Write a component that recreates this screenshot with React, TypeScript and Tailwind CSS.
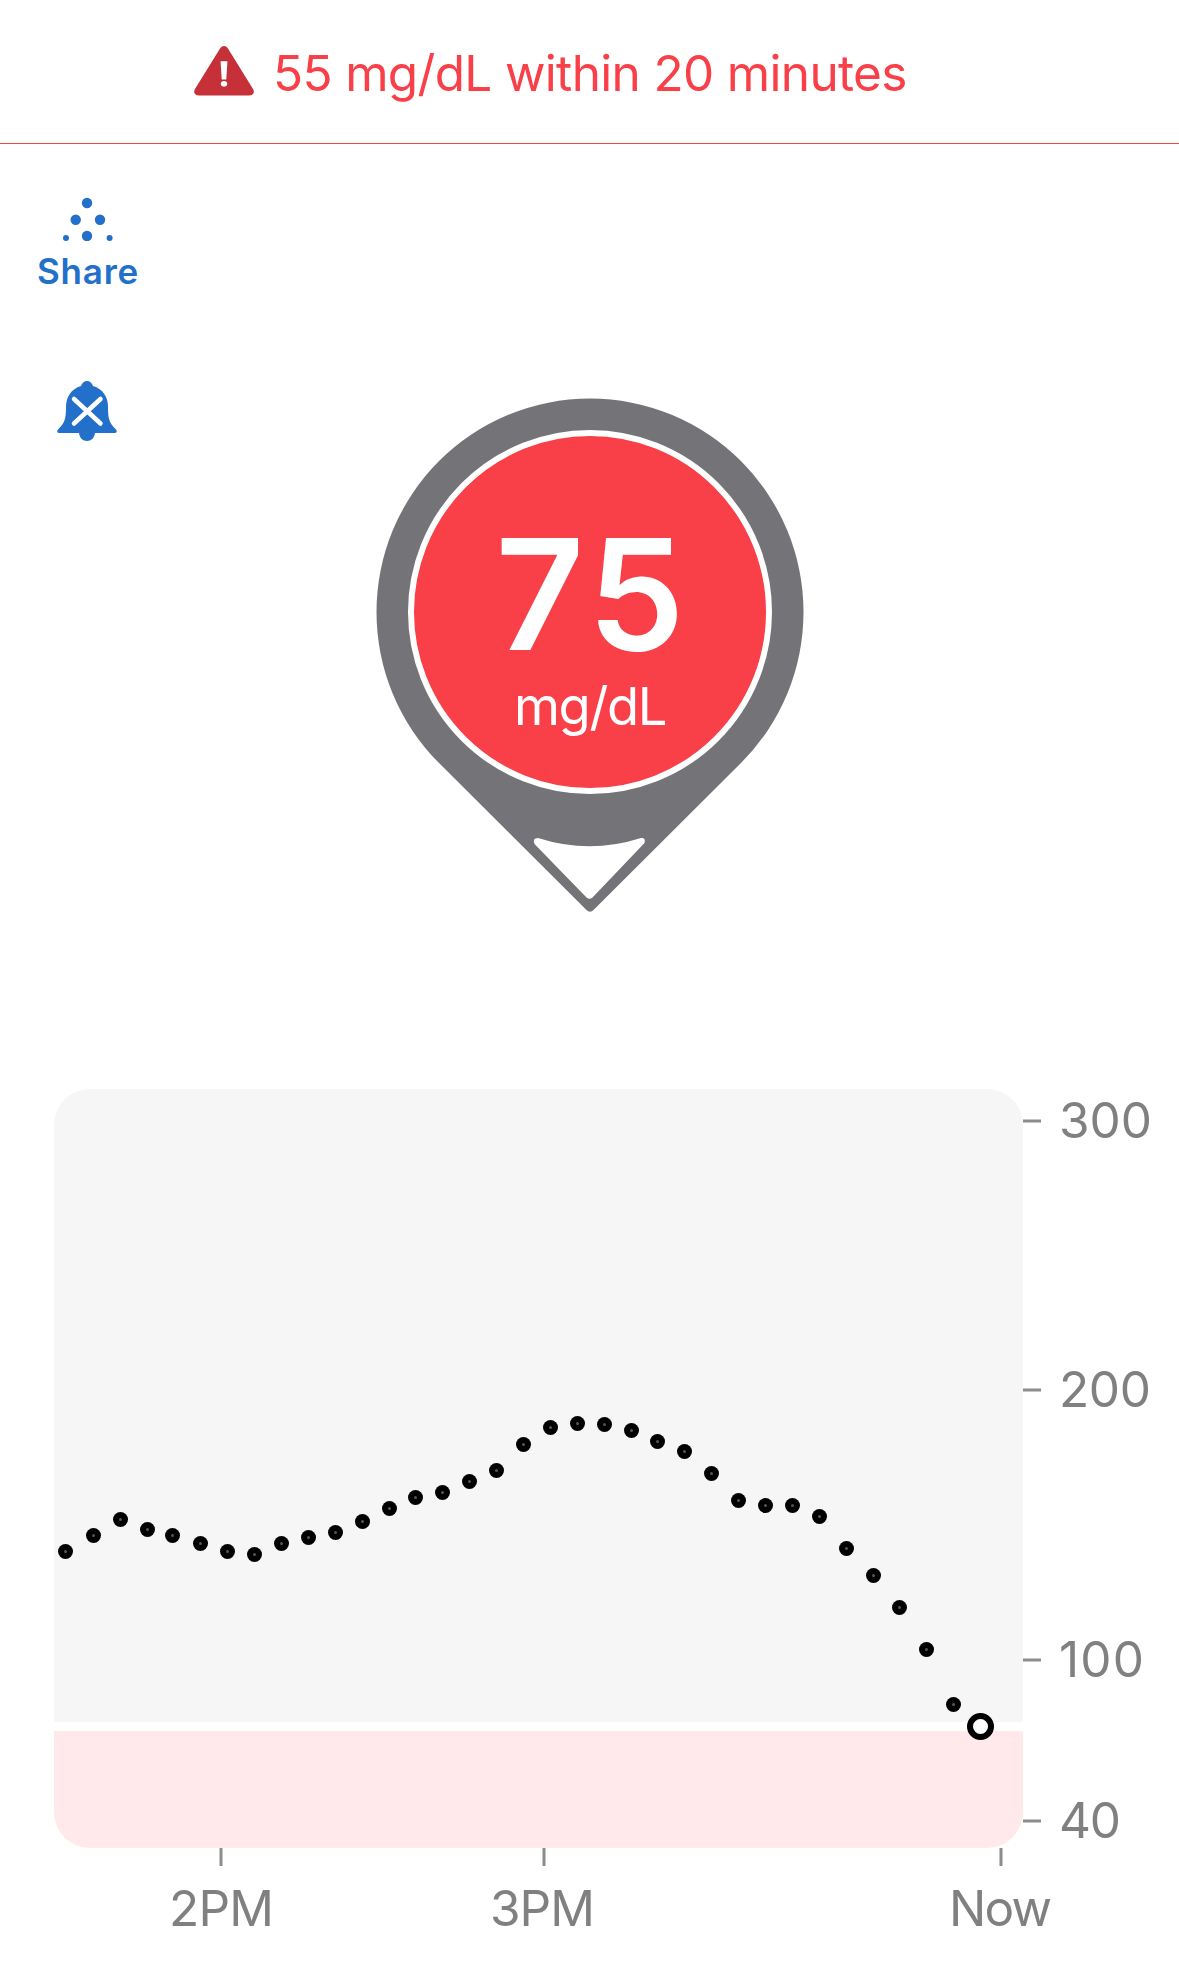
import React from 'react';

interface Reading {
  x: number;
  y: number;
}

interface Tick {
  label: string;
  pos: number;
  textPos: number;
  width: number;
}

// chart coordinates, origin at the top left of the plot area
const readings: Reading[] = [
  { x: 11.5, y: 462.5 },
  { x: 39.5, y: 446.5 },
  { x: 66.5, y: 430.5 },
  { x: 93.5, y: 440.5 },
  { x: 118.5, y: 446.5 },
  { x: 146.5, y: 454.5 },
  { x: 173.5, y: 462.5 },
  { x: 200.5, y: 465.5 },
  { x: 227.5, y: 454.5 },
  { x: 254.5, y: 448.5 },
  { x: 281.5, y: 443.5 },
  { x: 308.5, y: 432.5 },
  { x: 335.5, y: 419.5 },
  { x: 361.5, y: 408.5 },
  { x: 388.5, y: 403.5 },
  { x: 415.5, y: 392.5 },
  { x: 442.5, y: 381.5 },
  { x: 469.5, y: 355.5 },
  { x: 496.5, y: 338.5 },
  { x: 523.5, y: 334.5 },
  { x: 550.5, y: 335.5 },
  { x: 577.5, y: 341.5 },
  { x: 603.5, y: 352.5 },
  { x: 630.5, y: 362.5 },
  { x: 657.5, y: 384.5 },
  { x: 684.5, y: 411.5 },
  { x: 711.5, y: 416.5 },
  { x: 738.5, y: 416.5 },
  { x: 765.5, y: 427.5 },
  { x: 792.5, y: 459.5 },
  { x: 819.5, y: 486.5 },
  { x: 845.5, y: 518.5 },
  { x: 872.5, y: 560.5 },
  { x: 899.5, y: 615.5 },
];

const current: Reading = { x: 926.5, y: 637.5 };

const levels: Tick[] = [
  { label: '300', pos: 32, textPos: 1005, width: 93 },
  { label: '200', pos: 301, textPos: 1005, width: 92 },
  { label: '100', pos: 571, textPos: 1005, width: 85 },
  { label: '40', pos: 732, textPos: 1005, width: 62 },
];

const times: Tick[] = [
  { label: '2PM', pos: 167, textPos: 115, width: 105 },
  { label: '3PM', pos: 490, textPos: 436, width: 105 },
  { label: 'Now', pos: 947, textPos: 895, width: 103 },
];

const WarningIcon = () => (
  <svg className="mt-px h-[50px] w-[60px]" viewBox="0 0 60 50">
    <path
      d="M26.2 2.2Q27.7 0 30 0T33.8 2.2L59 43Q60.6 45.600 59.300 47.600Q58.200 49.500 55.500 49.500H4.500Q1.800 49.500 .7 47.600Q-.6 45.600 1 43Z"
      fill="#c53039"
    />
    <path d="M26.600 15.200H33.400L32.300 33.500H27.700Z" fill="#fff" />
    <ellipse cx="30" cy="37.800" rx="3.200" ry="2.800" fill="#fff" />
  </svg>
);

const ShareIcon = () => (
  <svg className="-ml-px h-[46px] w-[52px]" viewBox="0 0 52 46" fill="#2370ca">
    <circle cx="25" cy="8" r="5.200" />
    <circle cx="13.700" cy="24.700" r="5.200" />
    <circle cx="38" cy="24.700" r="5.200" />
    <circle cx="25" cy="41" r="5.200" />
    <circle cx="4" cy="43" r="3" />
    <circle cx="47.600" cy="43" r="3" />
  </svg>
);

const MutedBellIcon = () => (
  <svg className="h-[60px] w-[60px]" viewBox="0 0 60 60">
    <path
      d="M30 0C33 0 35 2 36 5C46 8 51 16 51 26C51 37 52 42 59 48.500Q61 51.500 58 52H38C37.500 57 34 60 30 60S22.500 57 22 52H2Q-1 51.500 1 48.500C8 42 9 37 9 26C9 16 14 8 24 5C25 2 27 0 30 0Z"
      fill="#2370ca"
    />
    <path d="M17 18L43.500 42.500M43.500 18L17 42.500" stroke="#fff" strokeWidth="4.500" strokeLinecap="round" />
  </svg>
);

const GlucosePin = () => (
  <div className="grid h-[514px] w-[428px]">
    <svg className="col-start-1 row-start-1 h-[514px] w-[428px]" viewBox="0 0 428 514">
      <path
        d="M63 365A213.500 213.500 0 1 1 365 365L217.500 512Q214 515.500 210.500 512Z"
        fill="#747378"
      />
      <circle cx="214" cy="214" r="179" fill="#f93f47" stroke="#fff" strokeWidth="6" />
      <path
        d="M162 440Q213.500 456.500 265 440Q270 439.500 268.500 445L216.500 499.500Q213.500 502 210.500 499.500L158.500 446Q156 440 162 440Z"
        fill="#fff"
      />
    </svg>
    <div className="col-start-1 row-start-1 flex flex-col items-center pt-[136px] text-white">
      <span className="pl-[5px] text-[154px] leading-[120px] font-semibold tracking-[5px]">75</span>
      <span className="mt-[26px] text-[52.5px] leading-[52px] tracking-[-1.4px]">mg/dL</span>
    </div>
  </div>
);

const TrendChart = () => (
  <svg className="ml-[54px] h-[860px] w-[1125px]" viewBox="0 0 1125 860">
    <path d="M0 633V36A36 36 0 0 1 36 0H933A36 36 0 0 1 969 36V633Z" fill="#f6f6f6" />
    <path d="M0 642H969V723A36 36 0 0 1 933 759H36A36 36 0 0 1 0 723Z" fill="#ffe9eb" />

    {levels.map((level) => (
      <g key={level.label}>
        <rect x="969" y={level.pos - 1.5} width="18" height="3" fill="#8c8c8c" />
        <text x={level.textPos} y={level.pos + 16.5} textLength={level.width} fontSize="49.500" fill="#808080">
          {level.label}
        </text>
      </g>
    ))}

    {times.map((time) => (
      <g key={time.label}>
        <rect x={time.pos - 1.5} y="759" width="3" height="18" fill="#8c8c8c" />
        <text x={time.textPos} y="837" textLength={time.width} fontSize="49.500" fill="#808080">
          {time.label}
        </text>
      </g>
    ))}

    {readings.map((reading) => (
      <g key={reading.x}>
        <circle cx={reading.x} cy={reading.y} r="7.500" fill="#000" />
        <circle cx={reading.x} cy={reading.y} r="1.500" fill="#555" />
      </g>
    ))}
    <circle cx={current.x} cy={current.y} r="10.500" fill="#fff" stroke="#000" strokeWidth="6" />
  </svg>
);

export default function App() {
  return (
    <div className="min-h-[1985px] w-[1179px] overflow-hidden bg-white font-['Inter',sans-serif]">
      <header className="flex h-[144px] items-start border-b border-[#f0483f] pt-[45px] pl-[194px]">
        <WarningIcon />
        <p className="-mt-[2px] ml-[19px] text-[49.5px] leading-[60px] tracking-[-0.66px] whitespace-nowrap text-[#f93f47]">
          55 mg/dL within 20 minutes
        </p>
      </header>

      <main>
        <section className="flex h-[945px] items-start">
          <div className="flex w-[376px] flex-col items-start pt-[51px]">
            <button className="ml-[37px] flex flex-col items-center text-[#2370ca]">
              <ShareIcon />
              <span className="mt-[9px] text-[35px] leading-[42px] font-semibold tracking-[0.8px]">Share</span>
            </button>
            <button className="mt-[89px] ml-[57px]">
              <MutedBellIcon />
            </button>
          </div>
          <div className="pt-[254px]">
            <GlucosePin />
          </div>
        </section>

        <TrendChart />
      </main>
    </div>
  );
}
